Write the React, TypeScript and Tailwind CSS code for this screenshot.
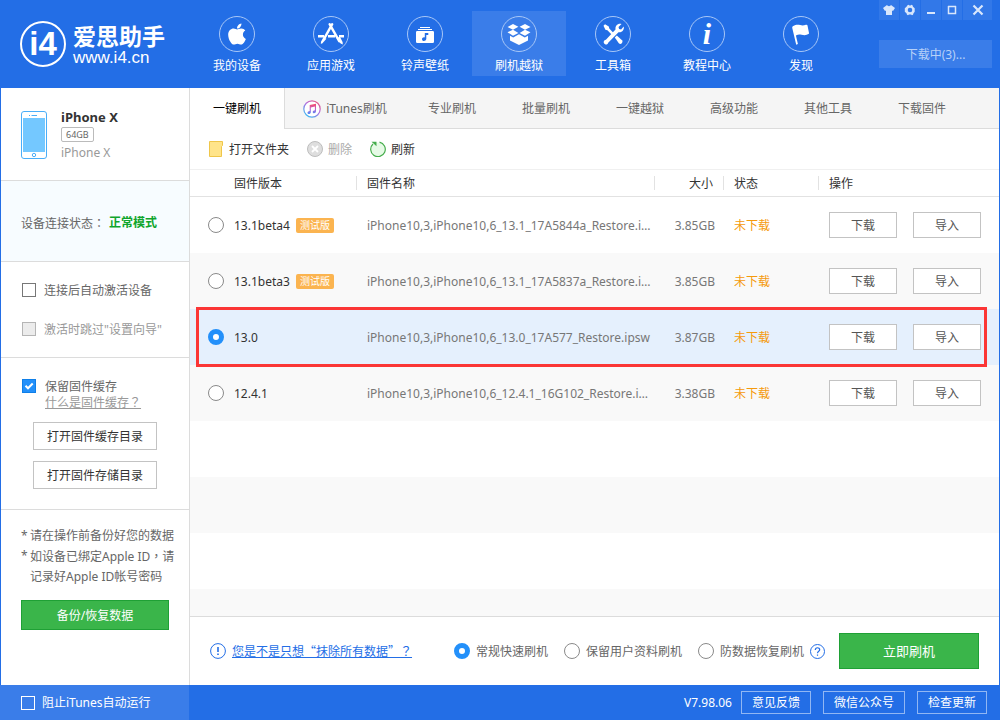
import React, { useState } from 'react';
import { clsx } from 'clsx';
import { FaApple } from 'react-icons/fa';

interface Firmware {
  version: string;
  beta?: boolean;
  file: string;
  size: string;
}

const FIRMWARES: Firmware[] = [
  { version: '13.1beta4', beta: true, file: 'iPhone10,3,iPhone10,6_13.1_17A5844a_Restore.ipsw', size: '3.85GB' },
  { version: '13.1beta3', beta: true, file: 'iPhone10,3,iPhone10,6_13.1_17A5837a_Restore.ipsw', size: '3.85GB' },
  { version: '13.0', file: 'iPhone10,3,iPhone10,6_13.0_17A577_Restore.ipsw', size: '3.87GB' },
  { version: '12.4.1', file: 'iPhone10,3,iPhone10,6_12.4.1_16G102_Restore.ipsw', size: '3.38GB' },
];

const TABS = ['专业刷机', '批量刷机', '一键越狱', '高级功能', '其他工具', '下载固件'];
const MODES = ['常规快速刷机', '保留用户资料刷机', '防数据恢复刷机'];

const RADIO =
  'size-4 shrink-0 appearance-none rounded-full border border-[#8a8a8a] bg-white checked:border-[5px] checked:border-[#2390fa]';
const CHECKBOX = 'size-3.5 shrink-0 appearance-none border';
const OUTLINE_BUTTON = 'border border-[#c3c3c3] bg-white pt-px whitespace-nowrap';
const HEAD_CELL = 'h-3.5 border-[#e2e2e2] leading-4';
// the TC face centres its punctuation in the em box
const PUNCT = "font-['Noto_Sans_CJK_TC',sans-serif]";

function AppStoreIcon() {
  return (
    <svg viewBox="0 0 28 28" className="size-7" fill="none" stroke="currentColor">
      <path d="M1 16.2h6M11 16.2h7M22 16.2h5" strokeWidth="2.4" />
      <path d="M15.2 4.2 7.6 17.8M12.6 4.2l9.6 17" strokeWidth="2.4" strokeLinecap="round" />
      <path d="m6.4 17.2 3 1.6-4.2 4.8-1.4.2.2-2z" fill="currentColor" stroke="none" />
      <path d="m19.6 18.4 3.2-1.8 2.8 5.4.2 2.6-2.2-1.2z" fill="currentColor" stroke="none" />
    </svg>
  );
}

function RingtoneIcon() {
  return (
    <svg viewBox="0 0 28 28" className="size-7">
      <path d="M9 7.500h10M7 9.500h14" stroke="currentColor" />
      <path
        fillRule="evenodd"
        fill="currentColor"
        d="M6.300 11h15.400q1.300 0 1.300 1.300v9.400q0 1.300-1.300 1.300H6.300Q5 23 5 21.700v-9.400Q5 11 6.300 11zM13.800 13v4.400c-2.300-.3-3 1-2.700 2.300.5 1.900 3.900 1.600 4.200-.7v-4h2v-2z"
      />
    </svg>
  );
}

function FlashIcon() {
  return (
    <svg viewBox="0 0 28 28" className="size-7" fill="currentColor">
      <path d="m8 4 5.400 2.700-5.400 3-5.500-2.600zM20 4l5.500 3.100-5.500 2.600-5.400-3zM2.500 12.300 8 9.700l5.400 3.200L8 15.800zM25.500 12.300 20 9.700l-5.400 3.200 5.400 2.900z" />
      <path d="m5 15.700 3.200 1.700 5.800-3.200 5.800 3.200 3.200-1.700v4.800L14 25l-9-4.500z" />
    </svg>
  );
}

function ToolsIcon() {
  return (
    <svg viewBox="0 0 28 28" className="size-7" fill="currentColor">
      <path d="m4.500 5.800 1.500-1.500 3.800 2.200.5 2 4 4.200-1.700 1.700-4.200-4.100-2-.5z" />
      <path d="m15.800 17.400 2-2 5.200 4.800q1.200 1.600-.2 3t-3 .1z" />
      <path d="M19 4.200c1.300-.6 2.500-.6 3.500-.2l-3 3.100.6 2 2 .5 2.600-3c.8 3.200-1.500 6.200-5.200 5.700L9.200 22.700c-.2 1.200-1.400 2-2.700 1.700-1.700-.4-2.500-2.500-1.200-3.900.4-.5 1-.7 1.600-.7L16.500 9.500c-.4-2.400.7-4.400 2.500-5.300z" />
    </svg>
  );
}

function FlagIcon() {
  return (
    <svg viewBox="0 0 28 28" className="size-7" fill="currentColor">
      <path d="M6.200 6c2.500-1.500 4.500-1.700 7-.9 2 .7 3.500.5 5.700-.3q1.300-.4 1.600.8l1.600 8c-2.700 2-5 2-7.500 1.200-2.300-.7-3.500-.5-5.700.6l2 8.700-1.700.6L5.200 7.800Q5 6.600 6.200 6z" />
    </svg>
  );
}

function LogoMark() {
  return (
    <div className="flex size-[46px] shrink-0 items-center justify-center rounded-full border-2 border-white font-['Liberation_Sans',sans-serif] text-[33px] leading-[42px] font-bold">
      i4
    </div>
  );
}

function ItunesIcon() {
  return (
    <svg viewBox="0 0 18 18" className="size-[18px]">
      <defs>
        <linearGradient id="itunesRing" x1="1" y1="0" x2="0.300" y2="1">
          <stop offset="0" stopColor="#f5586f" />
          <stop offset="0.500" stopColor="#b06be0" />
          <stop offset="1" stopColor="#41b6f0" />
        </linearGradient>
        <linearGradient id="itunesNote" x1="0" y1="0" x2="0" y2="1">
          <stop offset="0" stopColor="#fa4d62" />
          <stop offset="0.500" stopColor="#c05bd0" />
          <stop offset="1" stopColor="#4a90f5" />
        </linearGradient>
      </defs>
      <circle cx="9" cy="9" r="8.200" fill="#fff" stroke="url(#itunesRing)" strokeWidth="1.200" />
      <path
        d="M6.700 5 13 3.800v7.400c0 2.400-3.300 2.500-3.300.7 0-1.300 1.300-1.500 2.200-1.700V6.600l-4.100.8v4.900c0 2.200-3.300 2.300-3.300.5 0-1.300 1.300-1.500 2.200-1.700z"
        fill="url(#itunesNote)"
      />
    </svg>
  );
}

function PhoneIcon() {
  return (
    <svg viewBox="0 0 26 48" className="h-12 w-[26px] shrink-0">
      <rect x="0.500" y="0.500" width="25" height="47" rx="2.500" fill="#fff" stroke="#4aaef8" />
      <rect x="2" y="7" width="22" height="34" fill="#74c8ff" />
      <path d="M8 4.500h1M10.500 4.500H16" stroke="#4aaef8" />
      <circle cx="13" cy="44" r="1.700" fill="none" stroke="#4aaef8" />
    </svg>
  );
}

const NAV: { label: string; icon: React.ReactNode }[] = [
  { label: '我的设备', icon: <FaApple className="size-6" /> },
  { label: '应用游戏', icon: <AppStoreIcon /> },
  { label: '铃声壁纸', icon: <RingtoneIcon /> },
  { label: '刷机越狱', icon: <FlashIcon /> },
  { label: '工具箱', icon: <ToolsIcon /> },
  {
    label: '教程中心',
    icon: <span className="font-['Liberation_Serif',serif] text-[30px] leading-[34px] font-bold italic">i</span>,
  },
  { label: '发现', icon: <FlagIcon /> },
];

const WINDOW_BUTTONS: { name: string; icon: React.ReactNode }[] = [
  {
    name: '皮肤',
    icon: <path d="M4 1 0 4l2 3 1-.5V11h6V6.500l1 .5 2-3-4-3c-.8 1.500-3.200 1.500-4 0z" fill="currentColor" />,
  },
  {
    name: '设置',
    icon: (
      <path
        d="M3.500 1.200 4.500.8l1 .8h1l1-.8 1 .4.5 1.600 1.700 1.400v3.600L9.500 9.200 9 10.800l-1 .4-1-.8H5l-1 .8-1-.4-.5-1.600L.8 7.800V4.200l1.700-1.400zM6 3.700a2.300 2.300 0 1 0 0 4.600 2.300 2.300 0 0 0 0-4.600z"
        fill="currentColor"
        fillRule="evenodd"
      />
    ),
  },
  { name: '最小化', icon: <path d="M2 9h8" stroke="currentColor" strokeWidth="2" /> },
  { name: '最大化', icon: <path d="M2.500 2v7.500h7V2M2 2.500h8" fill="none" stroke="currentColor" strokeWidth="1.500" /> },
  { name: '关闭', icon: <path d="m1.500 1.500 9 9M10.500 1.500l-9 9" stroke="currentColor" strokeWidth="2.200" /> },
];

function Header() {
  return (
    <header className="flex h-[88px] shrink-0 bg-[#236ee6] text-white">
      <div className="flex w-[190px] shrink-0 items-center gap-[7px] pl-5">
        <LogoMark />
        <div className="whitespace-nowrap">
          <div className="text-[23px] leading-7 font-bold">爱思助手</div>
          <div className="font-['Liberation_Sans',sans-serif] text-[17px] leading-4">www.i4.cn</div>
        </div>
      </div>
      <nav className="flex pt-[11px]">
        {NAV.map((item, i) => (
          <a
            key={item.label}
            href="#"
            className={clsx('flex h-[65px] w-[94px] flex-col items-center gap-[5px] pt-[5px]', i === 3 && 'bg-[#3a7de9]')}
          >
            <span className="flex size-9 shrink-0 items-center justify-center rounded-full border border-[#a8c7f7]">
              {item.icon}
            </span>
            <span className="leading-[18px]">{item.label}</span>
          </a>
        ))}
      </nav>
      <div className="ml-auto flex flex-col gap-5 pr-2">
        <div className="flex gap-px">
          {WINDOW_BUTTONS.map((b, i) => (
            <button
              key={b.name}
              aria-label={b.name}
              className={clsx('flex h-5 items-center justify-center bg-[#3278e8] text-[#d9e7fc]', i === 4 ? 'w-[29px]' : 'w-5')}
            >
              <svg viewBox="0 0 12 12" className="size-3">
                {b.icon}
              </svg>
            </button>
          ))}
        </div>
        <button className="h-7 bg-[#3a7de9] pt-0.5 text-[#b8d1f8]">下载中(3)...</button>
      </div>
    </header>
  );
}

function Sidebar() {
  return (
    <aside className="flex w-[189px] shrink-0 flex-col border-r border-[#dcdcdc] text-[#666]">
      <section className="flex h-[93px] gap-3.5 border-b border-[#dcdcdc] pt-[23px] pl-5">
        <PhoneIcon />
        <div className="flex flex-col items-start">
          <h2 className="-mt-1 text-[13px] leading-5 font-bold text-[#333]">iPhone X</h2>
          <span className="rounded-xs border border-[#bbb] px-1 text-[9px] leading-[13px]">64GB</span>
          <span className="mt-0.5 leading-[18px] text-[#999]">iPhone X</span>
        </div>
      </section>

      <section className="flex h-[81px] items-center gap-1 border-b border-[#dcdcdc] bg-[#f7fcff] pt-1 pl-5">
        <span>
          设备连接状态<span className={PUNCT}>：</span>
        </span>
        <strong className="text-[#0fa52c]">正常模式</strong>
      </section>

      <section className="flex h-24 flex-col gap-[19px] border-b border-[#dcdcdc] pt-[18px] pl-[21px]">
        <label className="flex h-5 items-center gap-2">
          <input type="checkbox" className={clsx(CHECKBOX, 'border-[#777] bg-white')} />
          <span className="pt-0.5">连接后自动激活设备</span>
        </label>
        <label className="flex h-5 items-center gap-2 text-[#999]">
          <input type="checkbox" disabled className={clsx(CHECKBOX, 'border-[#b5b5b5] bg-[#ececec]')} />
          <span className="pt-0.5">激活时跳过"设置向导"</span>
        </label>
      </section>

      <section className="h-[152px] border-b border-[#dcdcdc] px-8 pt-5">
        <div className="-ml-[11px] flex flex-col">
          <label className="flex h-4 items-center gap-[9px]">
            <span className="relative flex size-3.5">
              <input type="checkbox" defaultChecked className="peer size-3.5 appearance-none border border-[#0f7fe8] bg-[#2390fa]" />
              <svg viewBox="0 0 14 14" className="pointer-events-none absolute inset-0 hidden size-3.5 peer-checked:block">
                <path d="m3.500 6.800 2.500 2.500 4.700-4.800" fill="none" stroke="#fff" strokeWidth="2" />
              </svg>
            </span>
            <span className="pt-0.5">保留固件缓存</span>
          </label>
          <a href="#" className="ml-[23px] h-4 leading-4 text-[#999] underline">
            什么是固件缓存<span className={PUNCT}>？</span>
          </a>
        </div>
        <div className="mt-3 flex flex-col gap-[11px]">
          <button className={clsx(OUTLINE_BUTTON, 'h-7 text-[#333]')}>打开固件缓存目录</button>
          <button className={clsx(OUTLINE_BUTTON, 'h-7 text-[#333]')}>打开固件存储目录</button>
        </div>
      </section>

      <section className="px-5 pt-4">
        <ul className="leading-5 whitespace-nowrap">
          <li className="flex h-5">
            <span className="w-[9px] shrink-0">*</span>请在操作前备份好您的数据
          </li>
          <li className="flex h-10">
            <span className="w-[9px] shrink-0">*</span>
            <span>
              如设备已绑定Apple ID<span className={PUNCT}>，</span>请
              <br />
              记录好Apple ID帐号密码
            </span>
          </li>
        </ul>
        <button className="mt-3.5 h-[30px] w-full border border-[#1fa035] bg-[#3ab54a] pt-px text-white">备份/恢复数据</button>
      </section>
    </aside>
  );
}

function Toolbar() {
  return (
    <div className="flex h-[41px] items-center border-b border-[#f0f0f0] pl-[18px] text-[#333]">
      <button className="flex items-center gap-[5px]">
        <svg viewBox="0 0 16 16" className="size-4">
          <path d="M1.500.5h13v4l-1 1v10h-12z" fill="#ffe48a" stroke="#efc64a" />
        </svg>
        <span className="pt-0.5">打开文件夹</span>
      </button>
      <button disabled className="ml-[18px] flex items-center gap-[5px] text-[#aaa]">
        <svg viewBox="0 0 16 16" className="size-4">
          <circle cx="8" cy="8" r="7.500" fill="#dedede" stroke="#bdbdbd" />
          <path d="m5 5 6 6M11 5l-6 6" stroke="#fff" strokeWidth="1.800" />
        </svg>
        <span className="pt-0.5">删除</span>
      </button>
      <button className="ml-[18px] flex items-center gap-[5px]">
        <svg viewBox="0 0 16 16" className="size-4">
          <circle cx="8" cy="8.500" r="7" fill="#e6fae6" />
          <path d="M9.500 1.200A7.300 7.300 0 1 1 3 3" fill="none" stroke="#45ad4c" strokeWidth="1.200" />
          <path d="M1.500.7h5v4.600z" fill="#45ad4c" />
        </svg>
        <span className="pt-0.5">刷新</span>
      </button>
    </div>
  );
}

function FirmwareTable() {
  const [selected, setSelected] = useState('13.0');

  return (
    <table className="w-full table-fixed border-separate border-spacing-0 text-left">
      <colgroup>
        <col className="w-[167px]" />
        <col />
        <col className="w-[69px]" />
        <col className="w-[95px]" />
        <col className="w-[180px]" />
      </colgroup>
      <thead>
        <tr className="h-[27px] text-[#333] *:border-b *:border-[#e2e2e2] *:p-0 *:font-normal">
          <th>
            <div className={clsx(HEAD_CELL, 'border-r pl-11')}>固件版本</div>
          </th>
          <th>
            <div className={clsx(HEAD_CELL, 'border-r pl-2.5')}>固件名称</div>
          </th>
          <th>
            <div className={clsx(HEAD_CELL, 'border-r pr-2.5 text-right')}>大小</div>
          </th>
          <th>
            <div className={clsx(HEAD_CELL, 'border-r pl-2.5')}>状态</div>
          </th>
          <th>
            <div className={clsx(HEAD_CELL, 'pl-2.5')}>操作</div>
          </th>
        </tr>
      </thead>
      <tbody>
        {FIRMWARES.map(fw => {
          const active = fw.version === selected;
          return (
            <tr
              key={fw.version}
              className={clsx('relative h-14 text-[#777] *:p-0', active ? 'z-10 bg-[#e5f0fd]' : 'odd:bg-white even:bg-[#f9f9f9]')}
            >
              <td>
                {active && (
                  <div className="pointer-events-none absolute -inset-y-0.5 right-3 left-1.5 border-3 border-[#fb3636]"></div>
                )}
                <label className="flex items-center gap-2.5 pl-[18px] text-[#333]">
                  <input
                    type="radio"
                    name="firmware"
                    checked={active}
                    onChange={() => setSelected(fw.version)}
                    className={RADIO}
                  />
                  <span className="flex items-center gap-1.5">
                    <span className="pt-0.5">{fw.version}</span>
                    {fw.beta && <span className="rounded-xs bg-[#fbb450] px-1 text-[10px] leading-[15px] text-white">测试版</span>}
                  </span>
                </label>
              </td>
              <td>
                <div className="truncate pt-0.5 pl-2.5">{fw.file}</div>
              </td>
              <td>
                <div className="pt-0.5 pr-[9px] text-right">{fw.size}</div>
              </td>
              <td>
                <div className="pt-0.5 pl-2.5 text-[#f59a0c]">未下载</div>
              </td>
              <td>
                <div className="flex gap-4 pl-2.5">
                  <button className={clsx(OUTLINE_BUTTON, 'h-[26px] w-[68px] text-[#555]')}>下载</button>
                  <button className={clsx(OUTLINE_BUTTON, 'h-[26px] w-[68px] text-[#555]')}>导入</button>
                </div>
              </td>
            </tr>
          );
        })}
      </tbody>
    </table>
  );
}

function FlashBar() {
  const [mode, setMode] = useState(MODES[0]);

  return (
    <div className="flex h-[69px] shrink-0 items-center border-t border-[#dcdcdc] pr-5 pl-5 whitespace-nowrap">
      <a href="#" className="flex items-center gap-1.5 font-['Noto_Sans_CJK_SC',sans-serif] text-[#236ee6]">
        <svg viewBox="0 0 16 16" className="size-4">
          <circle cx="8" cy="8" r="7.400" fill="none" stroke="currentColor" />
          <path d="M8 4v5M8 10.500v1.500" stroke="currentColor" strokeWidth="1.600" />
        </svg>
        <span className="underline">
          您是不是只想“抹除所有数据”<span className={PUNCT}>？</span>
        </span>
      </a>
      <div className="ml-auto flex gap-4 text-[#666]">
        {MODES.map(m => (
          <label key={m} className="flex items-center gap-1.5">
            <input type="radio" name="mode" checked={mode === m} onChange={() => setMode(m)} className={RADIO} />
            <span className="pt-0.5">{m}</span>
          </label>
        ))}
      </div>
      <button aria-label="帮助" className="ml-1.5 text-[#236ee6]">
        <svg viewBox="0 0 15 15" className="size-[15px]">
          <circle cx="7.500" cy="7.500" r="7" fill="none" stroke="currentColor" />
          <path d="M5.300 6c0-3 4.400-2.900 4.400-.3 0 1.600-2.200 1.500-2.200 3.500M7.500 10.400v1.300" fill="none" stroke="currentColor" strokeWidth="1.200" />
        </svg>
      </button>
      <button className="ml-3.5 h-9 w-[140px] border border-[#1fa035] bg-[#3ab54a] pt-px text-[13px] text-white">立即刷机</button>
    </div>
  );
}

function Footer() {
  return (
    <footer className="flex h-[35px] shrink-0 bg-[#236ee6] text-white">
      <label className="flex w-[189px] shrink-0 items-center gap-[7px] bg-[#3a7de9] pl-[21px]">
        <input type="checkbox" className={clsx(CHECKBOX, 'border-white')} />
        阻止iTunes自动运行
      </label>
      <div className="ml-auto flex items-center gap-3 pr-[13px]">
        <span className="-mr-[3px]">V7.98.06</span>
        {['意见反馈', '微信公众号', '检查更新'].map(t => (
          <button key={t} className="h-[23px] border border-[#91b7f3] px-[10px] leading-[21px]">
            {t}
          </button>
        ))}
      </div>
    </footer>
  );
}

export default function App() {
  return (
    <div className="flex min-h-screen flex-col bg-white font-['Noto_Sans','Noto_Sans_CJK_SC',sans-serif] text-xs">
      <Header />
      <main className="flex flex-1 border-x border-[#236ee6]">
        <Sidebar />
        <div className="flex min-w-0 flex-1 flex-col">
          <div className="flex h-[41px] shrink-0 text-[#666]">
            <button className="w-[94px] text-black">一键刷机</button>
            <div className="flex flex-1 border-b border-l border-[#dcdcdc] bg-[#f5f5f5] *:pt-px">
              <button className="flex w-[120px] items-center justify-center gap-[5px]">
                <ItunesIcon />
                iTunes刷机
              </button>
              {TABS.map(t => (
                <button key={t} className="w-[94px]">
                  {t}
                </button>
              ))}
            </div>
          </div>
          <Toolbar />
          <FirmwareTable />
          {/* empty striped rows below the list */}
          <div className="flex-1 bg-[linear-gradient(#fff_50%,#f9f9f9_50%)] bg-[length:100%_112px]"></div>
          <FlashBar />
        </div>
      </main>
      <Footer />
    </div>
  );
}
